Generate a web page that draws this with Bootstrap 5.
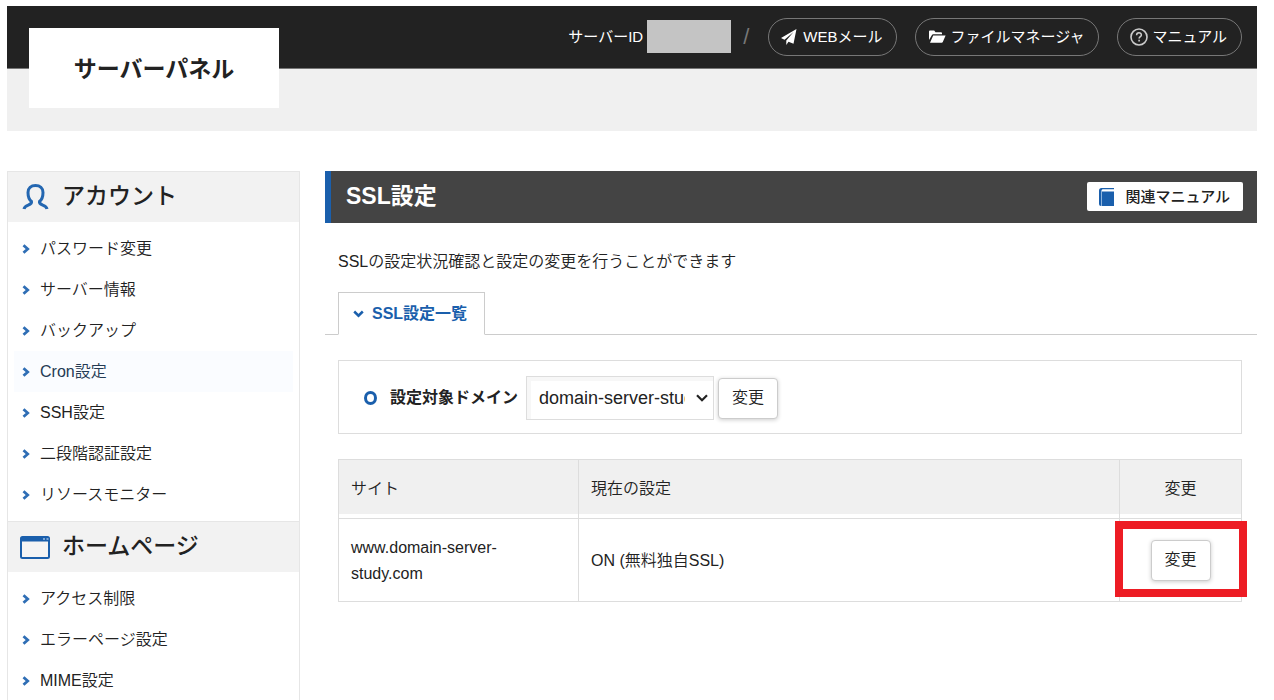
<!DOCTYPE html>
<html lang="ja">
<head>
<meta charset="utf-8">
<meta name="viewport" content="width=device-width, initial-scale=1">
<title>サーバーパネル - SSL設定</title>
<link href="https://cdn.jsdelivr.net/npm/bootstrap@5.3.0/dist/css/bootstrap.min.css" rel="stylesheet">
<style>
  :root { --brand: #1a5fac; --ink: #222; --line: #ddd; }
  body { font-family: "Liberation Sans", "Noto Sans CJK JP", sans-serif; font-size: 16px; font-weight: 350; line-height: 26px; color: var(--ink); background: #fff; padding: 6px 17px 0 7px; }
  a { color: inherit; text-decoration: none; }
  svg { flex: none; }
  .site-top { background: #f0f0f0; height: 125px; }
  .top-bar { background: #222; border-bottom: 1px solid #777; height: 63px; color: #fff; padding: 0 15px 0 22px; font-size: 15px; font-weight: 400; }
  .logo-box { width: 250px; height: 80px; margin-top: 22px; padding-top: 2px; background: #fff; color: var(--ink); font-size: 23px; font-weight: 700; }
  .top-nav { padding-bottom: 1px; }
  .id-mask { width: 84px; height: 33px; background: #c4c4c4; }
  .top-links { gap: 18px; margin-left: 7px; }
  .pill-link { height: 38px; border: 1px solid #777; border-radius: 19px; padding: 0 14px 0 12px; gap: 4px; }
  .pill-link svg { width: 18px; }
  .top-sep { color: #777; font-size: 22px; }
  .main-area { gap: 25px; padding-top: 40px; }
  .side-menu { width: 293px; border: 1px solid #e6e6e6; border-width: 0 1px; }
  .side-title { background: #f2f2f2; border-top: 1px solid #e6e6e6; height: 51px; font-size: 23px; font-weight: 500; padding: 0 12px; gap: 12px; margin: 0; }
  .side-title svg { width: 30px; }
  .side-list { padding: 6px; }
  .side-list a { height: 41px; padding: 0 8px; gap: 10px; }
  .side-list a.current { background: #fafcff; color: #243a54; }
  .page-title { background: #444; color: #fff; border-left: 6px solid var(--brand); height: 52px; padding: 0 14px 1px 15px; }
  .page-title h1 { font-size: 23px; font-weight: 700; }
  .guide-btn { background: #fff; color: var(--ink); border: 0; border-radius: 2px; height: 29px; padding: 0 13px 0 12px; gap: 10px; font-size: 15px; font-weight: 500; }
  .lead-text { padding: 26px 0 1px 13px; }
  .tab-row { border-bottom: 1px solid #ccc; padding-left: 13px; }
  .tab-row .tab-link { height: 43px; margin-bottom: -1px; border: 1px solid #ccc; border-bottom-color: #fff; background: #fff; color: var(--brand); font-weight: 700; padding: 0 17px 0 14px; gap: 8px; }
  .pane { margin: 25px 15px 0 13px; }
  .domain-box { border: 1px solid var(--line); height: 74px; padding: 2px 25px 0; gap: 4px; }
  .domain-box label { font-weight: 700; gap: 13px; margin-right: 4px; }
  .domain-select { width: 188px; height: 44px; border: 1px solid var(--line); border-radius: 0; padding: 0 28px 0 12px; font-size: 18px; font-weight: 400; color: var(--ink); text-overflow: clip; box-shadow: inset 4px 4px 0 #f7f7f7; background-position: right 5px center; background-size: 12px 8px;
    background-image: url("data:image/svg+xml,%3Csvg xmlns='http://www.w3.org/2000/svg' viewBox='0 0 12 8'%3E%3Cpath d='M1 1.2l5 5 5-5' fill='none' stroke='%23222' stroke-width='2.2'/%3E%3C/svg%3E"); }
  .change-btn { width: 60px; height: 41px; background: #fff; border: 1px solid #ccc; border-radius: 4px; padding: 0 0 1px; font-weight: 350; line-height: 26px; box-shadow: 0 1px 4px rgba(0,0,0,.2); color: var(--ink); }
  .ssl-table { table-layout: fixed; margin: 25px 0 0; width: 100%; border-collapse: collapse; }
  .ssl-table th, .ssl-table td { border: 1px solid var(--line); padding: 0 13px 0 12px; vertical-align: middle; }
  .ssl-table th { height: 59px; font-weight: 350; background: #f0f0f0; box-shadow: inset 0 -4px #fff; }
  .ssl-table td { height: 83px; padding-top: 1px; }
  .ssl-table .text-center { padding: 0; }
  .col-site { width: 240px; } .col-change { width: 122px; }
  .focus-mark { position: absolute; inset: -19px -36px -16px; border: 8px solid #ed1c24; pointer-events: none; }
</style>
</head>
<body class="min-vh-100 d-flex flex-column">
<svg class="d-none">
  <symbol id="arrow" viewBox="0 0 8 10"><path d="M1.5 1.200L5.700 5 1.500 8.800" fill="none" stroke="#2f6eb5" stroke-width="2.800"/></symbol>
</svg>

<header class="site-top">
  <div class="top-bar d-flex justify-content-between">
    <a href="#" class="logo-box d-flex align-items-center justify-content-center flex-shrink-0">サーバーパネル</a>
    <nav class="top-nav d-flex align-items-center">
      <span>サーバーID</span>
      <span class="id-mask ms-1"></span>
      <span class="top-sep mx-2 px-1">/</span>
      <div class="top-links d-flex">
        <a href="#" class="pill-link d-flex align-items-center"><svg height="16" viewBox="0 0 18 16"><path d="M15.500 0L0 9l3.500 1.700L12.500 3 5.300 11.500V16l2.200-3.300 5 2z" fill="#fff"/></svg>WEBメール</a>
        <a href="#" class="pill-link d-flex align-items-center"><svg height="14" viewBox="0 0 18 14"><path d="M1 10V1.500Q1 .5 2 .5h4.200l1.300 1.700H13q1 0 1 1v1H5.300q-1 0-1.500 1z" fill="#fff"/><path d="M5.200 5.500H17.600L14.800 12q-.3.8-1.200.8H2z" fill="#fff"/></svg>ファイルマネージャ</a>
        <a href="#" class="pill-link d-flex align-items-center"><svg height="18" viewBox="0 0 18 18" fill="none" stroke="#ccc"><circle cx="9" cy="9" r="8" stroke-width="1.600"/><path d="M6.600 7.200C6.600 4 11.400 4 11.400 7c0 1.700-2.300 1.600-2.300 3.500" stroke-width="1.500"/><path d="M9.100 11.800v1.700" stroke-width="1.600"/></svg>マニュアル</a>
      </div>
    </nav>
  </div>
</header>

<div class="main-area d-flex flex-grow-1">
  <aside class="side-menu flex-shrink-0">
    <h2 class="side-title d-flex align-items-center"><svg height="26" viewBox="0 0 30 26"><path d="M4 25C4.500 20.500 12.500 21.500 11.500 17.500 8.800 15.500 8 12 8 8.500 8 4 11 1.500 15.500 1.500S23 4 23 8.500C23 12 22.200 15.500 19.500 17.500 18.500 21.500 26.500 20.500 27 25" fill="none" stroke="#2467b1" stroke-width="3"/></svg>アカウント</h2>
    <nav class="side-list">
      <a href="#" class="d-flex align-items-center"><svg width="8" height="10"><use href="#arrow"/></svg>パスワード変更</a>
      <a href="#" class="d-flex align-items-center"><svg width="8" height="10"><use href="#arrow"/></svg>サーバー情報</a>
      <a href="#" class="d-flex align-items-center"><svg width="8" height="10"><use href="#arrow"/></svg>バックアップ</a>
      <a href="#" class="current d-flex align-items-center"><svg width="8" height="10"><use href="#arrow"/></svg>Cron設定</a>
      <a href="#" class="d-flex align-items-center"><svg width="8" height="10"><use href="#arrow"/></svg>SSH設定</a>
      <a href="#" class="d-flex align-items-center"><svg width="8" height="10"><use href="#arrow"/></svg>二段階認証設定</a>
      <a href="#" class="d-flex align-items-center"><svg width="8" height="10"><use href="#arrow"/></svg>リソースモニター</a>
    </nav>
    <h2 class="side-title d-flex align-items-center"><svg height="23" viewBox="0 0 30 23"><rect x="1" y="1" width="28" height="21" rx="1.500" fill="#f4f4f4" stroke="#1a5fac" stroke-width="2"/><path d="M1 1h28v4.500H1z" fill="#1a5fac"/><path d="M23 3h2M26.500 3h2" stroke="#9fc0e4" stroke-width="1.500"/></svg>ホームページ</h2>
    <nav class="side-list pb-0">
      <a href="#" class="d-flex align-items-center"><svg width="8" height="10"><use href="#arrow"/></svg>アクセス制限</a>
      <a href="#" class="d-flex align-items-center"><svg width="8" height="10"><use href="#arrow"/></svg>エラーページ設定</a>
      <a href="#" class="d-flex align-items-center"><svg width="8" height="10"><use href="#arrow"/></svg>MIME設定</a>
    </nav>
  </aside>

  <main class="flex-grow-1">
    <div class="page-title d-flex align-items-center justify-content-between">
      <h1 class="m-0">SSL設定</h1>
      <button type="button" class="guide-btn d-flex align-items-center"><svg width="16" height="18" viewBox="0 0 16 18"><path d="M2.500 0H15V18H2Q0 18 0 16V2.500Q0 0 2.500 0z" fill="#1a5fac"/><path d="M3.500 1.200H15v2.200H2.500Q2 2 3.500 1.200z" fill="#fff"/><path d="M2.500 3v15" stroke="#8fb4dc"/></svg>関連マニュアル</button>
    </div>
    <p class="lead-text mb-3">SSLの設定状況確認と設定の変更を行うことができます</p>
    <div class="tab-row d-flex">
      <a href="#ssl-list" class="tab-link d-flex align-items-center"><svg width="11" height="8" viewBox="0 0 11 8"><path d="M1.200 1.500l4.300 4.200 4.300-4.200" fill="none" stroke="#1a5fac" stroke-width="2.500"/></svg>SSL設定一覧</a>
    </div>
    <section id="ssl-list" class="pane">
      <form class="domain-box d-flex align-items-center">
        <label for="domain" class="d-flex align-items-center"><svg width="13" height="14" viewBox="0 0 13 14"><ellipse cx="6.500" cy="7" rx="5" ry="5.500" fill="none" stroke="#1a5fac" stroke-width="3"/></svg>設定対象ドメイン</label>
        <select id="domain" class="form-select domain-select"><option>domain-server-study.com</option></select>
        <button type="button" class="change-btn">変更</button>
      </form>
      <table class="ssl-table">
        <colgroup><col class="col-site"><col><col class="col-change"></colgroup>
        <thead><tr><th>サイト</th><th>現在の設定</th><th class="text-center">変更</th></tr></thead>
        <tbody><tr>
          <td>www.domain-server-<wbr>study.com</td>
          <td>ON (無料独自SSL)</td>
          <td class="text-center"><span class="position-relative d-inline-block"><button type="button" class="change-btn">変更</button><span class="focus-mark"></span></span></td>
        </tr></tbody>
      </table>
    </section>
  </main>
</div>
<script src="https://cdn.jsdelivr.net/npm/bootstrap@5.3.0/dist/js/bootstrap.bundle.min.js"></script>
</body>
</html>
